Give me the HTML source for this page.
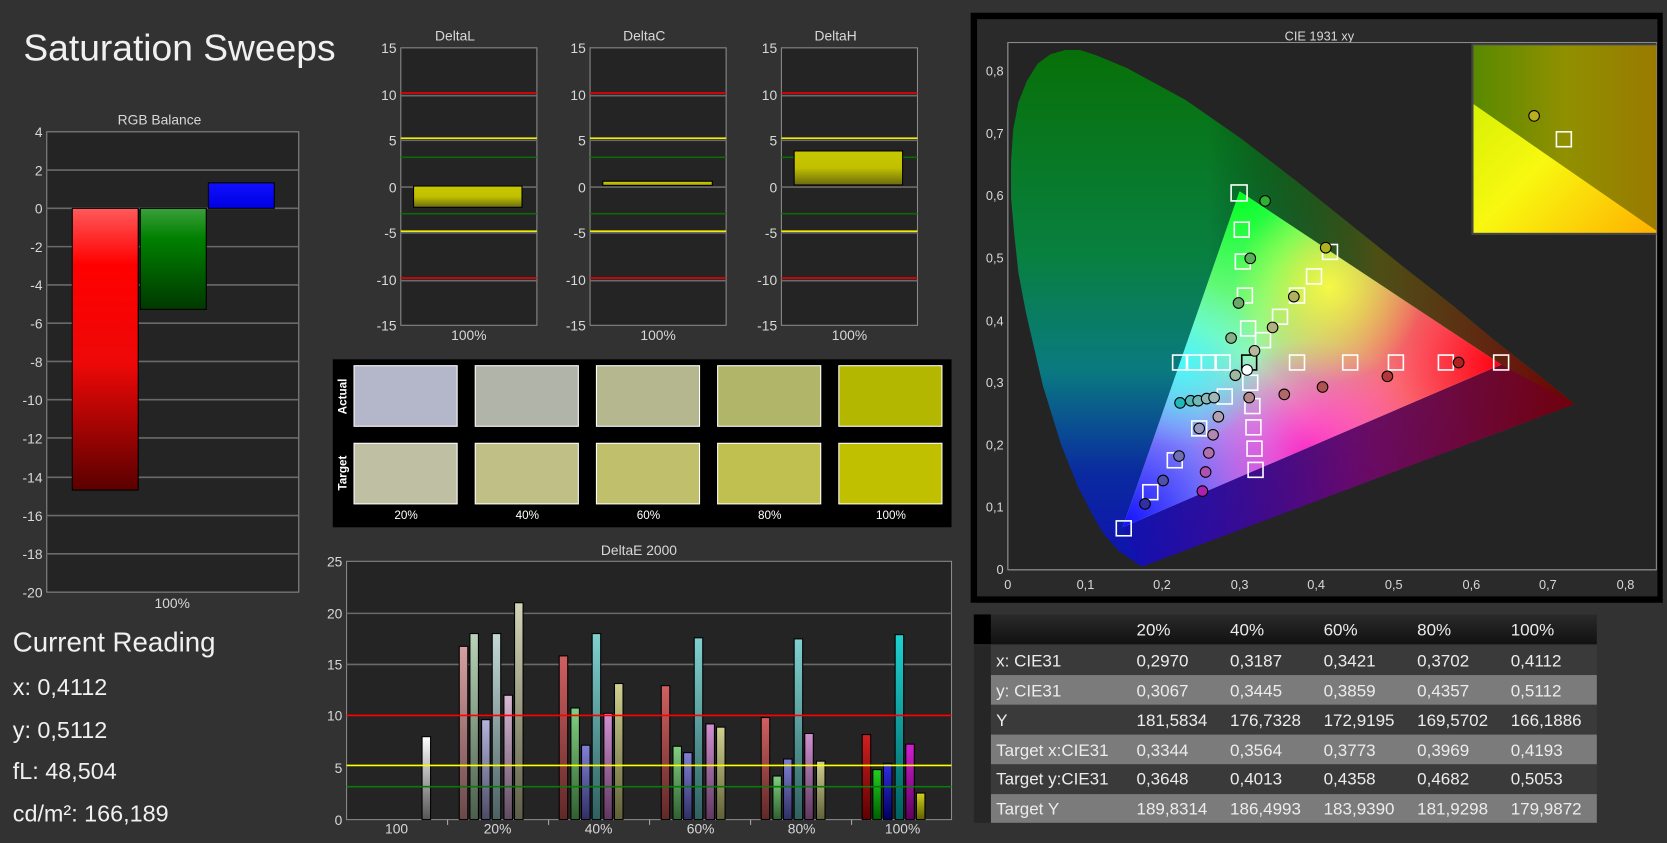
<!DOCTYPE html>
<html><head><meta charset="utf-8"><style>
html,body{margin:0;padding:0;background:#323232;overflow:hidden}
svg{display:block}
text{font-family:"Liberation Sans",sans-serif;fill:#d8d8d8}
</style></head><body>
<svg width="1667" height="843" viewBox="0 0 1568 793" preserveAspectRatio="none" xmlns="http://www.w3.org/2000/svg">
<defs>
<linearGradient id="gR" x1="0" y1="0" x2="0" y2="1"><stop offset="0" stop-color="#ff5a5a"/><stop offset=".2" stop-color="#ff0000"/><stop offset=".55" stop-color="#ee0808"/><stop offset="1" stop-color="#5a0000"/></linearGradient>
<linearGradient id="gG" x1="0" y1="0" x2="0" y2="1"><stop offset="0" stop-color="#3aa03a"/><stop offset=".3" stop-color="#008000"/><stop offset="1" stop-color="#003800"/></linearGradient>
<linearGradient id="gB" x1="0" y1="0" x2="0" y2="1"><stop offset="0" stop-color="#1010ff"/><stop offset="1" stop-color="#0000e0"/></linearGradient>
<linearGradient id="gY" x1="0" y1="0" x2="0" y2="1"><stop offset="0" stop-color="#c8c800"/><stop offset=".5" stop-color="#c0c000"/><stop offset="1" stop-color="#6a6a10"/></linearGradient>
<linearGradient id="b1" x1="0" y1="0" x2="0" y2="1"><stop offset="0" stop-color="#fff"/><stop offset="1" stop-color="#555"/></linearGradient>
<linearGradient id="p1" x1="0" y1="0" x2="0" y2="1"><stop offset="0" stop-color="#d8a0a0"/><stop offset="1" stop-color="#6a4848"/></linearGradient>
<linearGradient id="p2" x1="0" y1="0" x2="0" y2="1"><stop offset="0" stop-color="#b8d4b8"/><stop offset="1" stop-color="#4c5e4c"/></linearGradient>
<linearGradient id="p3" x1="0" y1="0" x2="0" y2="1"><stop offset="0" stop-color="#b4b4dc"/><stop offset="1" stop-color="#4c4c66"/></linearGradient>
<linearGradient id="p4" x1="0" y1="0" x2="0" y2="1"><stop offset="0" stop-color="#c4d8d8"/><stop offset="1" stop-color="#4c6262"/></linearGradient>
<linearGradient id="p5" x1="0" y1="0" x2="0" y2="1"><stop offset="0" stop-color="#d8b8d4"/><stop offset="1" stop-color="#604c60"/></linearGradient>
<linearGradient id="p6" x1="0" y1="0" x2="0" y2="1"><stop offset="0" stop-color="#d4d4b8"/><stop offset="1" stop-color="#5e5e48"/></linearGradient>
<linearGradient id="q1" x1="0" y1="0" x2="0" y2="1"><stop offset="0" stop-color="#d06060"/><stop offset="1" stop-color="#602828"/></linearGradient>
<linearGradient id="q2" x1="0" y1="0" x2="0" y2="1"><stop offset="0" stop-color="#80d080"/><stop offset="1" stop-color="#306030"/></linearGradient>
<linearGradient id="q3" x1="0" y1="0" x2="0" y2="1"><stop offset="0" stop-color="#8080d8"/><stop offset="1" stop-color="#303066"/></linearGradient>
<linearGradient id="q4" x1="0" y1="0" x2="0" y2="1"><stop offset="0" stop-color="#80d0d0"/><stop offset="1" stop-color="#306060"/></linearGradient>
<linearGradient id="q5" x1="0" y1="0" x2="0" y2="1"><stop offset="0" stop-color="#d090d0"/><stop offset="1" stop-color="#603860"/></linearGradient>
<linearGradient id="q6" x1="0" y1="0" x2="0" y2="1"><stop offset="0" stop-color="#d0d090"/><stop offset="1" stop-color="#606038"/></linearGradient>
<linearGradient id="r1" x1="0" y1="0" x2="0" y2="1"><stop offset="0" stop-color="#d02020"/><stop offset="1" stop-color="#600000"/></linearGradient>
<linearGradient id="r2" x1="0" y1="0" x2="0" y2="1"><stop offset="0" stop-color="#20d020"/><stop offset="1" stop-color="#006000"/></linearGradient>
<linearGradient id="r3" x1="0" y1="0" x2="0" y2="1"><stop offset="0" stop-color="#3030e0"/><stop offset="1" stop-color="#000060"/></linearGradient>
<linearGradient id="r4" x1="0" y1="0" x2="0" y2="1"><stop offset="0" stop-color="#20d0d0"/><stop offset="1" stop-color="#006060"/></linearGradient>
<linearGradient id="r5" x1="0" y1="0" x2="0" y2="1"><stop offset="0" stop-color="#d020d0"/><stop offset="1" stop-color="#600060"/></linearGradient>
<linearGradient id="r6" x1="0" y1="0" x2="0" y2="1"><stop offset="0" stop-color="#d0d020"/><stop offset="1" stop-color="#606000"/></linearGradient>
<linearGradient id="loc" x1="0" y1="0" x2="0" y2="1"><stop offset="0" stop-color="#087008"/><stop offset=".4" stop-color="#088040"/><stop offset=".62" stop-color="#0a7a80"/><stop offset=".82" stop-color="#0a2aa0"/><stop offset="1" stop-color="#1010b0"/></linearGradient>
<linearGradient id="locR" x1="0" y1="0" x2="1" y2="0"><stop offset=".35" stop-color="#000" stop-opacity="0"/><stop offset=".65" stop-color="#6a3a00" stop-opacity=".7"/><stop offset="1" stop-color="#700000" stop-opacity="1"/></linearGradient>
<linearGradient id="locB" x1="0" y1="0" x2="1" y2="0"><stop offset="0" stop-color="#1010b0"/><stop offset=".5" stop-color="#70007a"/><stop offset="1" stop-color="#700010"/></linearGradient>
<radialGradient id="tG" cx="1166" cy="180" r="230" gradientUnits="userSpaceOnUse"><stop offset="0" stop-color="#00ff20"/><stop offset="1" stop-color="#00ff20" stop-opacity="0"/></radialGradient>
<radialGradient id="tB" cx="1056" cy="496" r="200" gradientUnits="userSpaceOnUse"><stop offset="0" stop-color="#1010ff"/><stop offset="1" stop-color="#1010ff" stop-opacity="0"/></radialGradient>
<radialGradient id="tR" cx="1412" cy="343" r="230" gradientUnits="userSpaceOnUse"><stop offset="0" stop-color="#ff0010"/><stop offset="1" stop-color="#ff0010" stop-opacity="0"/></radialGradient>
<radialGradient id="tM" cx="1230" cy="430" r="110" gradientUnits="userSpaceOnUse"><stop offset="0" stop-color="#ff00c0" stop-opacity=".8"/><stop offset="1" stop-color="#ff00c0" stop-opacity="0"/></radialGradient>
<radialGradient id="tY" cx="1250" cy="270" r="90" gradientUnits="userSpaceOnUse"><stop offset="0" stop-color="#ffff40" stop-opacity=".9"/><stop offset="1" stop-color="#ffff40" stop-opacity="0"/></radialGradient>
<radialGradient id="tC" cx="1110" cy="340" r="80" gradientUnits="userSpaceOnUse"><stop offset="0" stop-color="#40ffff" stop-opacity=".9"/><stop offset="1" stop-color="#40ffff" stop-opacity="0"/></radialGradient>
<linearGradient id="inset" x1="0" y1="0" x2="1" y2="1"><stop offset="0" stop-color="#c8ee00"/><stop offset=".5" stop-color="#f8f810"/><stop offset="1" stop-color="#ffb000"/></linearGradient>
<linearGradient id="insetD" x1="0" y1="0" x2="1" y2="0"><stop offset="0" stop-color="#5a8a00"/><stop offset=".5" stop-color="#909000"/><stop offset="1" stop-color="#9a7a00"/></linearGradient>
<linearGradient id="hdr" x1="0" y1="0" x2="0" y2="1"><stop offset="0" stop-color="#2a2a2a"/><stop offset="1" stop-color="#111"/></linearGradient>
<path id="locus" d="M1074,533 L1052,518 L1038,502 L1028,485 L1014,458 L998,418 L981,363 L965,294 L958,257 L954,220 L951,186 L951,152 L953,122 L958,96 L966,76 L976,60 L988,51 L1002,47 L1016,47 L1031,52 L1060,64 L1115,94 L1167,130 L1219,170 L1270,211 L1320,251 L1366,287 L1403,318 L1450,355 L1481,380 Z"/>
</defs>

<text x="22" y="57" font-size="35" style="fill:#f0f0f0">Saturation Sweeps</text>

<text x="150" y="117" font-size="13" text-anchor="middle">RGB Balance</text>
<rect x="44" y="124" width="237" height="433" fill="#242424" stroke="#8a8a8a"/>
<g stroke="#6a6a6a" stroke-width="1.5">
<line x1="44" x2="281" y1="160" y2="160"/><line x1="44" x2="281" y1="196" y2="196"/><line x1="44" x2="281" y1="232" y2="232"/><line x1="44" x2="281" y1="268" y2="268"/><line x1="44" x2="281" y1="304" y2="304"/><line x1="44" x2="281" y1="340" y2="340"/><line x1="44" x2="281" y1="376" y2="376"/><line x1="44" x2="281" y1="412" y2="412"/><line x1="44" x2="281" y1="449" y2="449"/><line x1="44" x2="281" y1="485" y2="485"/><line x1="44" x2="281" y1="521" y2="521"/>
</g>
<g font-size="13" text-anchor="end">
<text x="40" y="129">4</text><text x="40" y="165">2</text><text x="40" y="201">0</text><text x="40" y="237">-2</text><text x="40" y="273">-4</text><text x="40" y="309">-6</text><text x="40" y="345">-8</text><text x="40" y="381">-10</text><text x="40" y="417">-12</text><text x="40" y="454">-14</text><text x="40" y="490">-16</text><text x="40" y="526">-18</text><text x="40" y="562">-20</text>
</g>
<rect x="68" y="196" width="62" height="265" fill="url(#gR)" stroke="#000"/>
<rect x="132" y="196" width="62" height="95" fill="url(#gG)" stroke="#000"/>
<rect x="196" y="172" width="62" height="24" fill="url(#gB)" stroke="#000"/>
<text x="162" y="572" font-size="13" text-anchor="middle">100%</text>

<g>
<text x="428" y="38" font-size="13" text-anchor="middle">DeltaL</text>
<rect x="377" y="45" width="128" height="261" fill="#242424" stroke="#8a8a8a"/>
<g stroke="#6a6a6a" stroke-width="1.5"><line x1="377" x2="505" y1="90" y2="90"/><line x1="377" x2="505" y1="132" y2="132"/><line x1="377" x2="505" y1="176" y2="176"/><line x1="377" x2="505" y1="219" y2="219"/><line x1="377" x2="505" y1="264" y2="264"/></g>
<line x1="377" x2="505" y1="87.5" y2="87.5" stroke="#e00" stroke-width="1.5"/><line x1="377" x2="505" y1="261.5" y2="261.5" stroke="#e00" stroke-width="1.5"/>
<line x1="377" x2="505" y1="130" y2="130" stroke="#ee0" stroke-width="1.5"/><line x1="377" x2="505" y1="217.5" y2="217.5" stroke="#ee0" stroke-width="1.5"/>
<line x1="377" x2="505" y1="148" y2="148" stroke="#0a6a0a" stroke-width="1.5"/><line x1="377" x2="505" y1="201" y2="201" stroke="#0a6a0a" stroke-width="1.5"/>
<g font-size="13" text-anchor="end"><text x="373" y="50">15</text><text x="373" y="94">10</text><text x="373" y="137">5</text><text x="373" y="181">0</text><text x="373" y="224">-5</text><text x="373" y="268">-10</text><text x="373" y="311">-15</text></g>
<rect x="389" y="175" width="102" height="20" fill="url(#gY)" stroke="#000"/>
<text x="441" y="320" font-size="13" text-anchor="middle">100%</text>
</g>
<g transform="translate(178,0)">
<text x="428" y="38" font-size="13" text-anchor="middle">DeltaC</text>
<rect x="377" y="45" width="128" height="261" fill="#242424" stroke="#8a8a8a"/>
<g stroke="#6a6a6a" stroke-width="1.5"><line x1="377" x2="505" y1="90" y2="90"/><line x1="377" x2="505" y1="132" y2="132"/><line x1="377" x2="505" y1="176" y2="176"/><line x1="377" x2="505" y1="219" y2="219"/><line x1="377" x2="505" y1="264" y2="264"/></g>
<line x1="377" x2="505" y1="87.5" y2="87.5" stroke="#e00" stroke-width="1.5"/><line x1="377" x2="505" y1="261.5" y2="261.5" stroke="#e00" stroke-width="1.5"/>
<line x1="377" x2="505" y1="130" y2="130" stroke="#ee0" stroke-width="1.5"/><line x1="377" x2="505" y1="217.5" y2="217.5" stroke="#ee0" stroke-width="1.5"/>
<line x1="377" x2="505" y1="148" y2="148" stroke="#0a6a0a" stroke-width="1.5"/><line x1="377" x2="505" y1="201" y2="201" stroke="#0a6a0a" stroke-width="1.5"/>
<g font-size="13" text-anchor="end"><text x="373" y="50">15</text><text x="373" y="94">10</text><text x="373" y="137">5</text><text x="373" y="181">0</text><text x="373" y="224">-5</text><text x="373" y="268">-10</text><text x="373" y="311">-15</text></g>
<rect x="389" y="170.5" width="103" height="4" fill="url(#gY)" stroke="#000"/>
<text x="441" y="320" font-size="13" text-anchor="middle">100%</text>
</g>
<g transform="translate(358,0)">
<text x="428" y="38" font-size="13" text-anchor="middle">DeltaH</text>
<rect x="377" y="45" width="128" height="261" fill="#242424" stroke="#8a8a8a"/>
<g stroke="#6a6a6a" stroke-width="1.5"><line x1="377" x2="505" y1="90" y2="90"/><line x1="377" x2="505" y1="132" y2="132"/><line x1="377" x2="505" y1="176" y2="176"/><line x1="377" x2="505" y1="219" y2="219"/><line x1="377" x2="505" y1="264" y2="264"/></g>
<line x1="377" x2="505" y1="87.5" y2="87.5" stroke="#e00" stroke-width="1.5"/><line x1="377" x2="505" y1="261.5" y2="261.5" stroke="#e00" stroke-width="1.5"/>
<line x1="377" x2="505" y1="130" y2="130" stroke="#ee0" stroke-width="1.5"/><line x1="377" x2="505" y1="217.5" y2="217.5" stroke="#ee0" stroke-width="1.5"/>
<line x1="377" x2="505" y1="148" y2="148" stroke="#0a6a0a" stroke-width="1.5"/><line x1="377" x2="505" y1="201" y2="201" stroke="#0a6a0a" stroke-width="1.5"/>
<g font-size="13" text-anchor="end"><text x="373" y="50">15</text><text x="373" y="94">10</text><text x="373" y="137">5</text><text x="373" y="181">0</text><text x="373" y="224">-5</text><text x="373" y="268">-10</text><text x="373" y="311">-15</text></g>
<rect x="389" y="142" width="102" height="32" fill="url(#gY)" stroke="#000"/>
<text x="441" y="320" font-size="13" text-anchor="middle">100%</text>
</g>

<rect x="313" y="338" width="582" height="158" fill="#000"/>
<text transform="translate(326,373) rotate(-90)" font-size="11" font-weight="bold" text-anchor="middle" style="fill:#fff">Actual</text>
<text transform="translate(326,445) rotate(-90)" font-size="11" font-weight="bold" text-anchor="middle" style="fill:#fff">Target</text>
<g stroke="#fff" stroke-width="1">
<rect x="333" y="344" width="97" height="57" fill="#b4b7c9"/><rect x="447" y="344" width="97" height="57" fill="#b1b4a8"/><rect x="561" y="344" width="97" height="57" fill="#b5b78e"/><rect x="675" y="344" width="97" height="57" fill="#b1b56a"/><rect x="789" y="344" width="97" height="57" fill="#b4b700"/>
<rect x="333" y="417" width="97" height="57" fill="#bfbfa3"/><rect x="447" y="417" width="97" height="57" fill="#c0bf86"/><rect x="561" y="417" width="97" height="57" fill="#c0bf6c"/><rect x="675" y="417" width="97" height="57" fill="#c0c050"/><rect x="789" y="417" width="97" height="57" fill="#c0c000"/>
</g>
<g font-size="11" text-anchor="middle"><text x="382" y="488" style="fill:#fff">20%</text><text x="496" y="488" style="fill:#fff">40%</text><text x="610" y="488" style="fill:#fff">60%</text><text x="724" y="488" style="fill:#fff">80%</text><text x="838" y="488" style="fill:#fff">100%</text></g>

<text x="601" y="522" font-size="13" text-anchor="middle">DeltaE 2000</text>
<rect x="326" y="528" width="569" height="243" fill="#242424" stroke="#8a8a8a"/>
<g stroke="#6a6a6a" stroke-width="1.5"><line x1="326" x2="895" y1="577" y2="577"/><line x1="326" x2="895" y1="625" y2="625"/></g>
<g font-size="13" text-anchor="end"><text x="322" y="533">25</text><text x="322" y="582">20</text><text x="322" y="630">15</text><text x="322" y="678">10</text><text x="322" y="727">5</text><text x="322" y="776">0</text></g>
<g stroke="#000" stroke-width="1">
<rect x="397" y="693" width="8" height="78" fill="url(#b1)"/>
<rect x="432" y="608" width="8" height="163" fill="url(#p1)"/><rect x="442" y="596" width="8" height="175" fill="url(#p2)"/><rect x="453" y="677" width="8" height="94" fill="url(#p3)"/><rect x="463" y="596" width="8" height="175" fill="url(#p4)"/><rect x="474" y="654" width="8" height="117" fill="url(#p5)"/><rect x="484" y="567" width="8" height="204" fill="url(#p6)"/>
<rect x="526" y="617" width="8" height="154" fill="url(#q1)"/><rect x="537" y="666" width="8" height="105" fill="url(#q2)"/><rect x="547" y="701" width="8" height="70" fill="url(#q3)"/><rect x="557" y="596" width="8" height="175" fill="url(#q4)"/><rect x="568" y="671" width="8" height="100" fill="url(#q5)"/><rect x="578" y="643" width="8" height="128" fill="url(#q6)"/>
<rect x="622" y="645" width="8" height="126" fill="url(#q1)"/><rect x="633" y="702" width="8" height="69" fill="url(#q2)"/><rect x="643" y="708" width="8" height="63" fill="url(#q3)"/><rect x="653" y="600" width="8" height="171" fill="url(#q4)"/><rect x="664" y="681" width="8" height="90" fill="url(#q5)"/><rect x="674" y="684" width="8" height="87" fill="url(#q6)"/>
<rect x="716" y="675" width="8" height="96" fill="url(#q1)"/><rect x="727" y="730" width="8" height="41" fill="url(#q2)"/><rect x="737" y="714" width="8" height="57" fill="url(#q3)"/><rect x="747" y="601" width="8" height="170" fill="url(#q4)"/><rect x="757" y="690" width="8" height="81" fill="url(#q5)"/><rect x="768" y="716" width="8" height="55" fill="url(#q6)"/>
<rect x="811" y="691" width="8" height="80" fill="url(#r1)"/><rect x="821" y="724" width="8" height="47" fill="url(#r2)"/><rect x="831" y="718" width="8" height="53" fill="url(#r3)"/><rect x="842" y="597" width="8" height="174" fill="url(#r4)"/><rect x="852" y="700" width="8" height="71" fill="url(#r5)"/><rect x="862" y="746" width="8" height="25" fill="url(#r6)"/>
</g>
<line x1="326" x2="895" y1="673" y2="673" stroke="#f00" stroke-width="1.5"/>
<line x1="326" x2="895" y1="720" y2="720" stroke="#ff0" stroke-width="1.5"/>
<line x1="326" x2="895" y1="740" y2="740" stroke="#0a7a0a" stroke-width="1.5"/>
<g stroke="#aaa"><line x1="421" x2="421" y1="771" y2="776"/><line x1="516" x2="516" y1="771" y2="776"/><line x1="611" x2="611" y1="771" y2="776"/><line x1="706" x2="706" y1="771" y2="776"/><line x1="801" x2="801" y1="771" y2="776"/></g>
<g font-size="13" text-anchor="middle"><text x="373" y="784">100</text><text x="468" y="784">20%</text><text x="563" y="784">40%</text><text x="659" y="784">60%</text><text x="754" y="784">80%</text><text x="849" y="784">100%</text></g>

<text x="12" y="613" font-size="26" style="fill:#f0f0f0">Current Reading</text>
<text x="12" y="654" font-size="22" style="fill:#f0f0f0">x: 0,4112</text>
<text x="12" y="694" font-size="22" style="fill:#f0f0f0">y: 0,5112</text>
<text x="12" y="733" font-size="22" style="fill:#f0f0f0">fL: 48,504</text>
<text x="12" y="773" font-size="22" style="fill:#f0f0f0">cd/m²: 166,189</text>

<rect x="913" y="12" width="651" height="555" fill="#000"/>
<rect x="919" y="18" width="640" height="543" fill="#2a2a2a"/>
<text x="1241" y="38" font-size="12" text-anchor="middle">CIE 1931 xy</text>
<rect x="948" y="40" width="610" height="496" fill="#242424" stroke="#8a8a8a"/>
<use href="#locus" fill="url(#loc)"/>
<use href="#locus" fill="url(#locR)"/>
<path d="M1074,533 L1481,380 L1412,343 L1056,496 Z" fill="url(#locB)" opacity=".8"/>
<path d="M1166,180 L1412,343 L1056,496 Z" fill="#f4f0f4"/>
<path d="M1166,180 L1412,343 L1056,496 Z" fill="url(#tG)"/>
<path d="M1166,180 L1412,343 L1056,496 Z" fill="url(#tR)"/>
<path d="M1166,180 L1412,343 L1056,496 Z" fill="url(#tB)"/>
<path d="M1166,180 L1412,343 L1056,496 Z" fill="url(#tM)"/>
<path d="M1166,180 L1412,343 L1056,496 Z" fill="url(#tY)"/>
<path d="M1166,180 L1412,343 L1056,496 Z" fill="url(#tC)"/>
<g stroke="#8a8a8a"><line x1="948" x2="1558" y1="536" y2="536"/><line x1="948" x2="948" y1="40" y2="536"/></g>
<g font-size="12" text-anchor="end"><text x="944" y="540">0</text><text x="944" y="481">0,1</text><text x="944" y="423">0,2</text><text x="944" y="364">0,3</text><text x="944" y="306">0,4</text><text x="944" y="247">0,5</text><text x="944" y="188">0,6</text><text x="944" y="130">0,7</text><text x="944" y="71">0,8</text></g>
<g font-size="12" text-anchor="middle"><text x="948" y="554">0</text><text x="1021" y="554">0,1</text><text x="1093" y="554">0,2</text><text x="1166" y="554">0,3</text><text x="1238" y="554">0,4</text><text x="1311" y="554">0,5</text><text x="1384" y="554">0,6</text><text x="1456" y="554">0,7</text><text x="1529" y="554">0,8</text></g>
<g fill="none" stroke="#fff" stroke-width="1.5">
<rect x="1158" y="174" width="15" height="15"/><rect x="1161" y="209" width="14" height="14"/><rect x="1162" y="239" width="14" height="14"/><rect x="1164" y="271" width="14" height="14"/><rect x="1167" y="302" width="14" height="14"/>
<rect x="1213" y="334" width="14" height="14"/><rect x="1263" y="334" width="14" height="14"/><rect x="1306" y="334" width="14" height="14"/><rect x="1353" y="334" width="14" height="14"/><rect x="1405" y="334" width="14" height="14"/>
<rect x="1103" y="334" width="14" height="14"/><rect x="1116" y="334" width="14" height="14"/><rect x="1130" y="334" width="14" height="14"/><rect x="1143" y="334" width="14" height="14"/>
<rect x="1181" y="313" width="14" height="14"/><rect x="1197" y="291" width="14" height="14"/><rect x="1213" y="271" width="14" height="14"/><rect x="1229" y="253" width="14" height="14"/><rect x="1244" y="230" width="14" height="14"/>
<rect x="1145" y="366" width="14" height="14"/><rect x="1121" y="396" width="14" height="14"/><rect x="1098" y="426" width="14" height="14"/><rect x="1075" y="456" width="14" height="14"/><rect x="1050" y="490" width="14" height="14"/>
<rect x="1169" y="353" width="14" height="14"/><rect x="1171" y="375" width="14" height="14"/><rect x="1172" y="395" width="14" height="14"/><rect x="1173" y="415" width="14" height="14"/><rect x="1174" y="435" width="14" height="14"/>
</g>
<rect x="1168" y="334" width="14" height="14" fill="none" stroke="#000" stroke-width="1.5"/>
<g stroke="#000" stroke-width="1">
<circle cx="1190" cy="189" r="5" fill="#30b030"/><circle cx="1176" cy="243" r="5" fill="#5ab05a"/><circle cx="1165" cy="285" r="5" fill="#6aa86a"/><circle cx="1158" cy="318" r="5" fill="#88b088"/><circle cx="1162" cy="353" r="5" fill="#a0b8a0"/>
<circle cx="1247" cy="233" r="5" fill="#b0b020"/><circle cx="1217" cy="279" r="5" fill="#b0b060"/><circle cx="1197" cy="308" r="5" fill="#b0b080"/><circle cx="1180" cy="330" r="5" fill="#b8b8a0"/>
<circle cx="1372" cy="341" r="5" fill="#b02020"/><circle cx="1305" cy="354" r="5" fill="#b03838"/><circle cx="1244" cy="364" r="5" fill="#b05050"/><circle cx="1208" cy="371" r="5" fill="#b06868"/><circle cx="1175" cy="374" r="5" fill="#b08888"/>
<circle cx="1110" cy="379" r="5" fill="#20b8b8"/><circle cx="1120" cy="377" r="5" fill="#50b8b8"/><circle cx="1127" cy="377" r="5" fill="#70b8b8"/><circle cx="1135" cy="375" r="5" fill="#88b8b8"/><circle cx="1142" cy="374" r="5" fill="#a0b8b8"/>
<circle cx="1077" cy="474" r="5" fill="#3030a0"/><circle cx="1094" cy="452" r="5" fill="#5050a8"/><circle cx="1109" cy="429" r="5" fill="#7070b0"/><circle cx="1128" cy="403" r="5" fill="#9898b8"/>
<circle cx="1131" cy="462" r="5" fill="#b020b0"/><circle cx="1134" cy="444" r="5" fill="#b050b0"/><circle cx="1137" cy="426" r="5" fill="#b070b0"/><circle cx="1141" cy="409" r="5" fill="#b088b0"/><circle cx="1146" cy="392" r="5" fill="#b0a0b0"/>
<circle cx="1173" cy="348" r="5" fill="#fff"/>
</g>
<rect x="1384" y="41" width="174" height="180" fill="#444"/>
<rect x="1386" y="43" width="172" height="176" fill="url(#inset)"/>
<path d="M1386,43 L1558,43 L1558,217 L1386,98 Z" fill="url(#insetD)"/>
<circle cx="1443" cy="109" r="5" fill="#b8b020" stroke="#000"/>
<rect x="1464" y="124" width="14" height="14" fill="none" stroke="#fff" stroke-width="1.5"/>

<rect x="916" y="578" width="586" height="28" fill="url(#hdr)"/>
<rect x="916" y="578" width="16" height="28" fill="#000"/>
<rect x="932" y="607" width="570" height="28" fill="#3a3a3a"/>
<rect x="932" y="635" width="570" height="28" fill="#7b7b7b"/>
<rect x="932" y="663" width="570" height="28" fill="#3a3a3a"/>
<rect x="932" y="691" width="570" height="28" fill="#7b7b7b"/>
<rect x="932" y="719" width="570" height="28" fill="#3a3a3a"/>
<rect x="932" y="747" width="570" height="27" fill="#7b7b7b"/>
<rect x="916" y="607" width="16" height="167" fill="#262626"/>
<g font-size="16">
<text x="1069" y="598" style="fill:#ececec">20%</text><text x="1157" y="598" style="fill:#ececec">40%</text><text x="1245" y="598" style="fill:#ececec">60%</text><text x="1333" y="598" style="fill:#ececec">80%</text><text x="1421" y="598" style="fill:#ececec">100%</text>
<text x="937" y="627" style="fill:#ececec">x: CIE31</text><text x="1069" y="627" style="fill:#ececec">0,2970</text><text x="1157" y="627" style="fill:#ececec">0,3187</text><text x="1245" y="627" style="fill:#ececec">0,3421</text><text x="1333" y="627" style="fill:#ececec">0,3702</text><text x="1421" y="627" style="fill:#ececec">0,4112</text>
<text x="937" y="655" style="fill:#ececec">y: CIE31</text><text x="1069" y="655" style="fill:#ececec">0,3067</text><text x="1157" y="655" style="fill:#ececec">0,3445</text><text x="1245" y="655" style="fill:#ececec">0,3859</text><text x="1333" y="655" style="fill:#ececec">0,4357</text><text x="1421" y="655" style="fill:#ececec">0,5112</text>
<text x="937" y="683" style="fill:#ececec">Y</text><text x="1069" y="683" style="fill:#ececec">181,5834</text><text x="1157" y="683" style="fill:#ececec">176,7328</text><text x="1245" y="683" style="fill:#ececec">172,9195</text><text x="1333" y="683" style="fill:#ececec">169,5702</text><text x="1421" y="683" style="fill:#ececec">166,1886</text>
<text x="937" y="711" style="fill:#ececec">Target x:CIE31</text><text x="1069" y="711" style="fill:#ececec">0,3344</text><text x="1157" y="711" style="fill:#ececec">0,3564</text><text x="1245" y="711" style="fill:#ececec">0,3773</text><text x="1333" y="711" style="fill:#ececec">0,3969</text><text x="1421" y="711" style="fill:#ececec">0,4193</text>
<text x="937" y="738" style="fill:#ececec">Target y:CIE31</text><text x="1069" y="738" style="fill:#ececec">0,3648</text><text x="1157" y="738" style="fill:#ececec">0,4013</text><text x="1245" y="738" style="fill:#ececec">0,4358</text><text x="1333" y="738" style="fill:#ececec">0,4682</text><text x="1421" y="738" style="fill:#ececec">0,5053</text>
<text x="937" y="766" style="fill:#ececec">Target Y</text><text x="1069" y="766" style="fill:#ececec">189,8314</text><text x="1157" y="766" style="fill:#ececec">186,4993</text><text x="1245" y="766" style="fill:#ececec">183,9390</text><text x="1333" y="766" style="fill:#ececec">181,9298</text><text x="1421" y="766" style="fill:#ececec">179,9872</text>
</g>
</svg>
</body></html>
